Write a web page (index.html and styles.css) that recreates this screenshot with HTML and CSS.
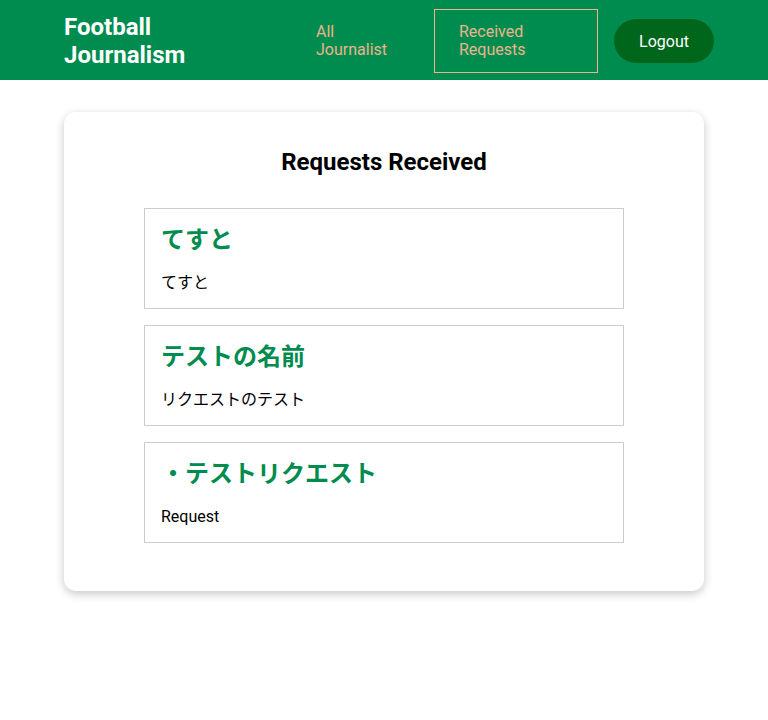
FILE: index.html
```html
<!DOCTYPE html>
<html lang="ja">
<head>
<meta charset="utf-8">
<title>Football Journalism</title>
<link rel="stylesheet" href="styles.css">
</head>
<body>
<header class="header">
  <div class="brand">Football Journalism</div>
  <nav class="nav">
    <a class="nav-link nav-link-all" href="#">All Journalist</a>
    <a class="nav-link nav-link-active" href="#">Received Requests</a>
    <button class="logout" type="button">Logout</button>
  </nav>
</header>
<main class="main">
  <section class="card">
    <h2 class="card-title">Requests Received</h2>
    <div class="list">
      <div class="item">
        <h3 class="item-title">てすと</h3>
        <p class="item-text">てすと</p>
      </div>
      <div class="item">
        <h3 class="item-title">テストの名前</h3>
        <p class="item-text">リクエストのテスト</p>
      </div>
      <div class="item">
        <h3 class="item-title">・テストリクエスト</h3>
        <p class="item-text">Request</p>
      </div>
    </div>
  </section>
</main>
</body>
</html>
```
FILE: styles.css
```css
* { box-sizing: border-box; }
body {
  margin: 0;
  font-family: Roboto, "Noto Sans CJK JP", sans-serif;
  background: #fff;
  color: #000;
}
.header {
  height: 80px;
  background: #008c4f;
  display: flex;
  align-items: center;
  padding: 2px 54px 0 64px;
}
.brand {
  color: #fff;
  font-size: 24px;
  font-weight: 700;
  line-height: 28px;
  width: 150px;
}
.nav {
  margin-left: auto;
  display: flex;
  align-items: center;
  gap: 16px;
}
.nav-link {
  display: block;
  color: #ebb48c;
  text-decoration: none;
  font-size: 16px;
  line-height: 18px;
  padding: 13px 24px;
  border: 1px solid transparent;
}
.nav-link-all { width: 127px; }
.nav-link-active {
  width: 164px;
  border-color: #ebb48c;
}
.logout {
  width: 100px;
  height: 44px;
  border: none;
  border-radius: 22px;
  background: #00661c;
  color: #fff;
  font-family: Roboto, sans-serif;
  font-size: 16px;
}
.main {
  padding: 32px 64px;
}
.card {
  background: #fff;
  border-radius: 12px;
  box-shadow: 0 3px 10px rgba(0,0,0,0.22);
  padding: 36px 80px 48px;
}
.card-title {
  margin: 0 0 32px;
  text-align: center;
  font-size: 24px;
  line-height: 28px;
  font-weight: 700;
}
.list {
  display: flex;
  flex-direction: column;
  gap: 16px;
}
.item {
  border: 1px solid #cccccc;
  padding: 14px 16px 16px;
}
.item-title {
  margin: 0 0 20px;
  color: #008c4f;
  font-size: 24px;
  line-height: 30px;
  font-weight: 600;
  font-family: "Noto Sans CJK JP", sans-serif;
}
.item-text {
  margin: 0;
  font-size: 16px;
  line-height: 19px;
  font-family: Roboto, "Noto Sans CJK JP", sans-serif;
}
```
